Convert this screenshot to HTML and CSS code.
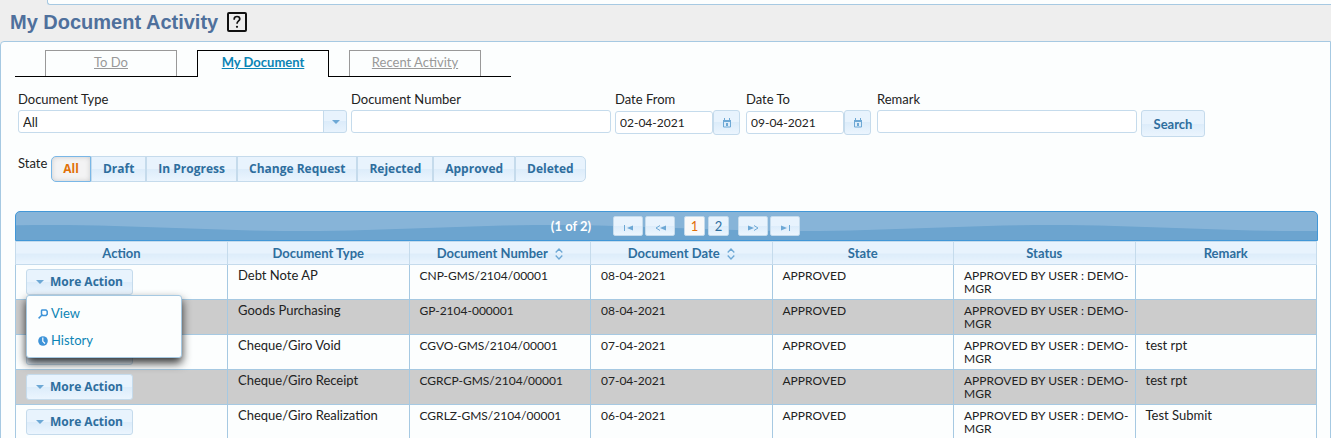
FILE: index.html
```html
<!DOCTYPE html>
<html lang="en">
<head>
<meta charset="utf-8">
<title>My Document Activity</title>
<link rel="stylesheet" href="styles.css">
</head>
<body>
<svg class="sprite" aria-hidden="true">
  <symbol id="calendar" viewBox="0 0 10 10"><path fill="none" stroke="currentColor" d="M1 2.500h8M1.500 2v7h7V2M1 3.500h8M2.500 0v3M7.500 0v3"/><path fill="currentColor" d="M4 5h2v3H4z"/></symbol>
  <symbol id="sort" viewBox="0 0 8 12"><path fill="none" stroke="currentColor" stroke-width="1.300" d="M.7 4.500 4 1l3.300 3.500M.7 7.500 4 11l3.300-3.500"/></symbol>
  <symbol id="down" viewBox="0 0 8 4"><path fill="currentColor" d="M0 0h8L4 4z"/></symbol>
</svg>
<div class="shell">
  <div class="topbar"></div>
  <header class="title">
    <h1>My Document Activity</h1>
    <button class="help" type="button" aria-label="Help">
      <svg viewBox="0 0 20 20" width="20" height="20"><rect x="1" y="1" width="18" height="18" rx="1" fill="none" stroke="#111" stroke-width="2"/><path d="M7.200 7.800V7C7.200 5.500 8.200 4.500 10 4.500S12.800 5.500 12.800 7c0 2-2.800 2-2.800 4.800" fill="none" stroke="#111" stroke-width="1.700"/><circle cx="10" cy="14.800" r="1.100" fill="#111"/></svg>
    </button>
  </header>
  <main class="panel">
    <nav class="tabs">
      <a href="#todo">To Do</a>
      <a href="#document" class="active" aria-current="page">My Document</a>
      <a href="#recent">Recent Activity</a>
    </nav>
    <form class="filters">
      <div class="field wide">
        <label for="type">Document Type</label>
        <select id="type"><option>All</option></select>
      </div>
      <div class="field medium">
        <label for="number">Document Number</label>
        <input id="number" type="text">
      </div>
      <div class="field date">
        <label for="from">Date From</label>
        <div class="picker"><input id="from" type="text" value="02-04-2021"><button type="button" class="btn" aria-label="Choose start date"><svg class="cal"><use href="#calendar"/></svg></button></div>
      </div>
      <div class="field date">
        <label for="to">Date To</label>
        <div class="picker"><input id="to" type="text" value="09-04-2021"><button type="button" class="btn" aria-label="Choose end date"><svg class="cal"><use href="#calendar"/></svg></button></div>
      </div>
      <div class="field medium">
        <label for="remark">Remark</label>
        <input id="remark" type="text">
      </div>
      <button type="button" class="btn search">Search</button>
    </form>
    <div class="state">
      <span id="state-label">State</span>
      <div class="segments" role="group" aria-labelledby="state-label">
        <button type="button" class="btn selected" aria-pressed="true">All</button>
        <button type="button" class="btn">Draft</button>
        <button type="button" class="btn">In Progress</button>
        <button type="button" class="btn">Change Request</button>
        <button type="button" class="btn">Rejected</button>
        <button type="button" class="btn">Approved</button>
        <button type="button" class="btn">Deleted</button>
      </div>
    </div>
    <section class="data">
      <div class="paginator">
        <span class="current">(1 of 2)</span>
        <div class="group">
          <button type="button" class="page nav" aria-label="First page"><svg viewBox="0 0 11 6"><path d="M1.500 0v6" stroke="currentColor" fill="none"/><path d="M10 .5v5L4 3z" fill="currentColor"/></svg></button>
          <button type="button" class="page nav" aria-label="Previous page"><svg viewBox="0 0 11 6"><path d="M5 .5 1 3l4 2.500" stroke="currentColor" fill="none"/><path d="M11 .5v5L5 3z" fill="currentColor"/></svg></button>
        </div>
        <div class="group numbers">
          <button type="button" class="page on">1</button>
          <button type="button" class="page">2</button>
        </div>
        <div class="group">
          <button type="button" class="page nav" aria-label="Next page"><svg viewBox="0 0 11 6"><path d="M6 .5 10 3 6 5.500" stroke="currentColor" fill="none"/><path d="M0 .5v5L6 3z" fill="currentColor"/></svg></button>
          <button type="button" class="page nav" aria-label="Last page"><svg viewBox="0 0 11 6"><path d="M9.500 0v6" stroke="currentColor" fill="none"/><path d="M1 .5v5L7 3z" fill="currentColor"/></svg></button>
        </div>
      </div>
      <table>
        <colgroup><col class="first"><col><col><col><col><col><col></colgroup>
        <thead>
          <tr><th>Action</th><th>Document Type</th><th>Document Number<svg class="sort"><use href="#sort"/></svg></th><th>Document Date<svg class="sort"><use href="#sort"/></svg></th><th>State</th><th>Status</th><th>Remark</th></tr>
        </thead>
        <tbody>
          <tr>
            <td class="action"><button type="button" class="btn more" aria-expanded="true"><svg class="down"><use href="#down"/></svg>More Action</button>
              <div class="menu">
                <a href="#view"><svg viewBox="0 0 10 10"><path d="M4 1h4l1.200 1.200v3L8 6.500H4.800L3.500 5.200V1.800zM4 6 .6 9.400" fill="none" stroke="#3d93d8" stroke-width="1.500"/></svg>View</a>
                <a href="#history"><svg viewBox="0 0 10 10"><circle cx="5" cy="5" r="4.800" fill="#3d93d8"/><path d="M4.800 1.500v3.800L7 7.500" fill="none" stroke="#fff" stroke-width="1.200"/></svg>History</a>
              </div>
            </td>
            <td>Debt Note AP</td><td class="code">CNP-GMS/2104/00001</td><td class="code">08-04-2021</td><td class="code">APPROVED</td><td class="code">APPROVED BY USER : DEMO-MGR</td><td></td>
          </tr>
          <tr><td class="action"><button type="button" class="btn more"><svg class="down"><use href="#down"/></svg>More Action</button></td><td>Goods Purchasing</td><td class="code">GP-2104-000001</td><td class="code">08-04-2021</td><td class="code">APPROVED</td><td class="code">APPROVED BY USER : DEMO-MGR</td><td></td></tr>
          <tr><td class="action"><button type="button" class="btn more"><svg class="down"><use href="#down"/></svg>More Action</button></td><td>Cheque/Giro Void</td><td class="code">CGVO-GMS/2104/00001</td><td class="code">07-04-2021</td><td class="code">APPROVED</td><td class="code">APPROVED BY USER : DEMO-MGR</td><td>test rpt</td></tr>
          <tr><td class="action"><button type="button" class="btn more"><svg class="down"><use href="#down"/></svg>More Action</button></td><td>Cheque/Giro Receipt</td><td class="code">CGRCP-GMS/2104/00001</td><td class="code">07-04-2021</td><td class="code">APPROVED</td><td class="code">APPROVED BY USER : DEMO-MGR</td><td>test rpt</td></tr>
          <tr><td class="action"><button type="button" class="btn more"><svg class="down"><use href="#down"/></svg>More Action</button></td><td>Cheque/Giro Realization</td><td class="code">CGRLZ-GMS/2104/00001</td><td class="code">06-04-2021</td><td class="code">APPROVED</td><td class="code">APPROVED BY USER : DEMO-MGR</td><td>Test Submit</td></tr>
        </tbody>
      </table>
    </section>
  </main>
</div>
</body>
</html>
```
FILE: styles.css
```css
* { box-sizing: border-box; }
body {
  margin: 0;
  background: #eee;
  color: #222;
  font: 13px/14px Lato, "Open Sans", sans-serif;
}
button, input, select { font: inherit; margin: 0; }
.sprite { display: none; }
.shell { height: 100vh; overflow: hidden; }
.topbar {
  height: 5px;
  margin-left: 47px;
  background: #fcfefe;
  border: 1px solid #a6c9e2;
  border-width: 0 0 1px 1px;
  border-radius: 0 0 0 3px;
}
.title {
  display: flex;
  align-items: center;
  gap: 9px;
  height: 36px;
  padding: 0 10px 2px;
}
.title h1 {
  margin: 0;
  color: #4f709c;
  font: bold 20px/24px "Liberation Sans", Arial, sans-serif;
}
.help { padding: 0; border: 0; background: none; height: 20px; }
.help svg { display: block; }
.panel {
  padding: 8px 12px 0 14px;
  background: #fcfefe;
  border: 1px solid #a6c9e2;
  border-radius: 4px 0 0 0;
}
.tabs {
  display: flex;
  gap: 20px;
  width: fit-content;
  padding: 0 30px;
  border-bottom: 1px solid #000;
}
.tabs a {
  width: 132px;
  height: 26px;
  border: 1px solid #999;
  border-bottom: 0;
  color: #999;
  line-height: 22px;
  text-align: center;
}
.tabs .active {
  height: 27px;
  margin-bottom: -1px;
  background: #fcfefe;
  border-color: #000;
  color: #0b84b5;
  font-weight: bold;
}
.filters {
  display: flex;
  align-items: flex-start;
  gap: 4px;
  padding: 15px 3px 0;
}
.field label { display: block; height: 18px; }
.field input, .field select {
  display: block;
  width: 100%;
  height: 23px;
  padding: 0 4px;
  color: #222;
  background: #fff;
  border: 1px solid #c5dbec;
  border-radius: 3px;
}
.wide { flex: 0 1 329px; }
.medium { flex: 0 1 260px; }
.date { flex: 0 0 127px; }
.field select {
  appearance: none;
  background:
    url("data:image/svg+xml,%3Csvg xmlns='http://www.w3.org/2000/svg' width='8' height='4'%3E%3Cpath fill='%236da8d5' d='M0 0h8L4 4z'/%3E%3C/svg%3E") no-repeat right 6px center,
    linear-gradient(#c5dbec, #c5dbec) no-repeat right 22px top / 1px 100%,
    linear-gradient(#e8f3fd 50%, #dcecfa 50%, #e8f3fd) no-repeat right / 22px 100%,
    #fff;
}
.picker { display: flex; align-items: center; }
.picker input { width: 98px; font-size: 12px; }
.btn {
  padding: 0;
  color: #2e6e9e;
  background: linear-gradient(#e8f3fd 50%, #dcecfa 50%, #ebf5fe);
  border: 1px solid #c5dbec;
  border-radius: 3px;
  font-weight: bold;
}
.picker .btn {
  display: grid;
  place-items: center;
  width: 27px;
  height: 25px;
  color: #6da8d5;
}
.cal { width: 10px; height: 10px; }
.search { width: 64px; height: 27px; margin-top: 18px; }
.state {
  display: flex;
  gap: 4px;
  padding: 19px 3px 0;
}
.segments { display: flex; }
.segments .btn {
  height: 26px;
  padding: 0 11px;
  border-radius: 0;
  font: bold 12px/16px "Open Sans", sans-serif;
}
.segments .btn:first-child { border-radius: 5px 0 0 5px; }
.segments .btn:last-child { border-radius: 0 5px 5px 0; }
.segments .selected {
  color: #e17009;
  background: #f3f3f4;
  border-color: #79b7e7;
  box-shadow: inset 0 0 5px #ccc;
}
.data { padding-top: 29px; }
.paginator {
  display: flex;
  justify-content: center;
  align-items: center;
  gap: 9px;
  height: 30px;
  padding-left: 18px;
  color: #fff;
  background:
    url("data:image/svg+xml,%3Csvg xmlns='http://www.w3.org/2000/svg' width='500' height='28'%3E%3Cpath fill='%236ca4cf' d='M0 13C90 13 160 19 250 19S410 13 500 13V28H0z'/%3E%3C/svg%3E") repeat-x 35px top,
    #87b4d8;
  border: 1px solid #4297d7;
  border-radius: 5px 5px 0 0;
}
.current { margin-right: 13px; font-weight: bold; }
.group { display: flex; gap: 2px; }
.numbers { gap: 3px; }
.page {
  display: grid;
  place-items: center;
  width: 21px;
  height: 20px;
  padding: 0;
  color: #2e6e9e;
  background: linear-gradient(#e8f3fd 50%, #dcecfa 50%, #ebf5fe);
  border: 1px solid #c5dbec;
  border-radius: 2px;
}
.page.on { color: #e17009; background: #f9f9f9; }
.page.nav { width: 30px; color: #6da8d5; }
.page svg { width: 11px; height: 6px; margin-top: 4px; }
table {
  width: calc(100% - 1px);
  border-collapse: collapse;
  table-layout: fixed;
}
.first { width: 212px; }
th {
  height: 23px;
  padding: 0;
  color: #2e6e9e;
  background: linear-gradient(#e8f3fd 50%, #dcecfa 50%, #ebf5fe);
  border: 1px solid #c5dbec;
}
.sort { width: 8px; height: 12px; margin-left: 7px; vertical-align: -2px; color: #6da8d5; }
td {
  height: 35px;
  padding: 4px 2px 4px 10px;
  border: 1px solid #a6c9e2;
  line-height: 13px;
  vertical-align: top;
}
.code { font-size: 12px; }
tbody tr:nth-child(even) { background: #ccc; }
.action { position: relative; }
.more {
  display: flex;
  align-items: center;
  justify-content: center;
  gap: 6px;
  width: 107px;
  height: 26px;
  font: bold 12px/16px "Open Sans", sans-serif;
}
.down { width: 8px; height: 4px; color: #6da8d5; }
.menu {
  position: absolute;
  z-index: 1;
  top: 30px;
  left: 10px;
  width: 156px;
  padding: 4px 0 3px;
  background: #fcfefe;
  border: 1px solid #a6c9e2;
  border-radius: 3px;
  box-shadow: 0 5px 10px rgba(0, 0, 0, .8);
}
.menu a {
  display: flex;
  align-items: center;
  gap: 3px;
  height: 27px;
  padding-left: 11px;
  color: #0b84b5;
  text-decoration: none;
}
.menu svg { width: 10px; height: 10px; }
```
